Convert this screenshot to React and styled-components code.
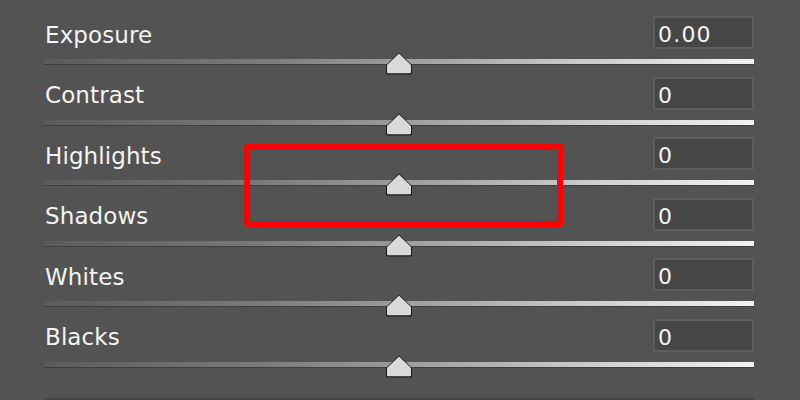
import React from "react";
import styled, { createGlobalStyle } from "styled-components";

const Global = createGlobalStyle`
  html, body { margin: 0; padding: 0; background: #535353; }
  body { width: 800px; height: 400px; overflow: hidden; }
`;

const Panel = styled.div`
  position: relative;
  width: 800px;
  height: 400px;
  box-sizing: border-box;
  padding: 16px 46px 0 44px;
  background: #535353;
  font-family: "DejaVu Sans", Verdana, sans-serif;
`;

const Row = styled.div`
  display: flex;
  flex-direction: column;
  height: 60.5px;
`;

const Header = styled.div`
  display: flex;
  align-items: center;
  justify-content: space-between;
  height: 33px;
`;

const Label = styled.span`
  font-size: 23px;
  color: #f4f4f4;
  padding-left: 1px;
  padding-top: 4px;
  letter-spacing: 0.1px;
`;

const ValueBox = styled.div`
  box-sizing: border-box;
  width: 101px;
  height: 33px;
  border: 2px solid #5e5e5e;
  background: #464646;
  color: #f4f4f4;
  font-size: 22px;
  display: flex;
  align-items: center;
  padding: 4px 0 0 3px;
  letter-spacing: 1.2px;
`;

const TrackWrap = styled.div`
  position: relative;
  margin-top: 10px;
  height: 5px;
`;

const Track = styled.div`
  height: 5px;
  background: linear-gradient(
    to right,
    #5b5b5b 0%,
    #7a7a7a 30%,
    #a4a4a4 55%,
    #d2d2d2 80%,
    #f2f2f2 100%
  );
  box-shadow: 0 1px 0 #3e3e3e;
`;

const Thumb = styled.svg`
  position: absolute;
  left: 341px;
  top: -7px;
  width: 28px;
  height: 23px;
`;

const Divider = styled.div`
  position: absolute;
  left: 44px;
  right: 46px;
  bottom: 0;
  height: 2px;
  background: #454545;
`;

const Highlight = styled.div`
  position: absolute;
  left: 244px;
  top: 144px;
  width: 319px;
  height: 83px;
  box-sizing: border-box;
  border: 6px solid #ff0000;
  border-radius: 3px;
`;

const rows = [
  { label: "Exposure", value: "0.00" },
  { label: "Contrast", value: "0" },
  { label: "Highlights", value: "0" },
  { label: "Shadows", value: "0" },
  { label: "Whites", value: "0" },
  { label: "Blacks", value: "0" },
];

function ThumbIcon() {
  return (
    <Thumb viewBox="0 0 28 23">
      <path d="M14 0.5 L27 13 L27 21 Q27 22.5 25.5 22.5 L2.5 22.5 Q1 22.5 1 21 L1 13 Z" fill="#1a1a1a" />
      <path d="M14 1.5 L26 13 L26 20 Q26 21.2 24.8 21.2 L3.2 21.2 Q2 21.2 2 20 L2 13 Z" fill="#d9d9d9" />
    </Thumb>
  );
}

export default function App() {
  return (
    <>
      <Global />
      <Panel>
        {rows.map((r) => (
          <Row key={r.label}>
            <Header>
              <Label>{r.label}</Label>
              <ValueBox>{r.value}</ValueBox>
            </Header>
            <TrackWrap>
              <Track />
              <ThumbIcon />
            </TrackWrap>
          </Row>
        ))}
        <Divider />
        <Highlight />
      </Panel>
    </>
  );
}
